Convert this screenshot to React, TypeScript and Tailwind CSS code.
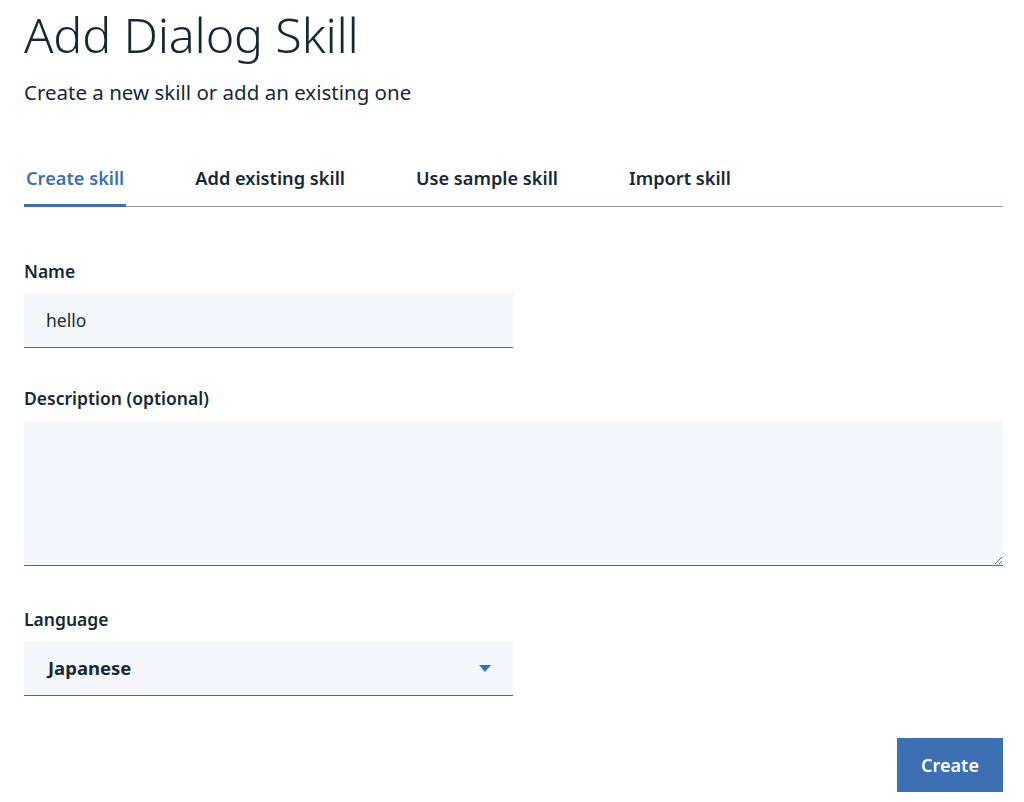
import React, { useState } from 'react';

const tabs = ['Create skill', 'Add existing skill', 'Use sample skill', 'Import skill'];

export default function App() {
  const [active, setActive] = useState(0);
  const [name, setName] = useState('hello');
  const [desc, setDesc] = useState('');

  return (
    <div
      className="min-h-screen bg-white pl-6 pr-[21px] text-[#152935]"
      style={{ fontFamily: '"Noto Sans", "Liberation Sans", sans-serif' }}
    >
      <h1 className="pt-[5px] text-[48.5px] font-light leading-[58px] tracking-[-0.2px]">Add Dialog Skill</h1>
      <p className="mt-[16px] text-[20.5px] leading-[26px]">Create a new skill or add an existing one</p>

      <div className="mt-[60px] flex border-b border-[#8c9ba5]">
        {tabs.map((t, i) => (
          <button
            key={t}
            onClick={() => setActive(i)}
            className={
              i === active
                ? 'mr-[67px] -mb-px border-b-[3px] border-[#3d70b2] px-[2px] pb-[13px] text-[18.2px] font-semibold leading-[26px] text-[#3d70b2]'
                : 'mr-[67px] -mb-px border-b-[3px] border-transparent px-[2px] pb-[13px] text-[18.2px] font-semibold leading-[26px] text-[#152935]'
            }
          >
            {t}
          </button>
        ))}
      </div>

      <div className="mt-[53px]">
        <label className="block text-[17.5px] font-semibold leading-[22px]">Name</label>
        <input
          value={name}
          onChange={(e) => setName(e.target.value)}
          className="mt-[11px] h-[55px] w-[489px] border-b border-[#5a6872] bg-[#f4f7fb] px-[22px] text-[17.5px] outline-none"
        />
      </div>

      <div className="mt-[39px]">
        <label className="block text-[17.5px] font-semibold leading-[22px]">Description (optional)</label>
        <textarea
          value={desc}
          onChange={(e) => setDesc(e.target.value)}
          className="mt-[12px] block h-[145px] w-full border-b border-[#5a6872] bg-[#f4f7fb] px-[22px] py-[14px] text-[17.5px] outline-none"
        />
      </div>

      <div className="mt-[42px]">
        <label className="block text-[17.5px] font-semibold leading-[22px]">Language</label>
        <div className="mt-[11px] flex h-[55px] w-[489px] items-center border-b border-[#5a6872] bg-[#f4f7fb] pl-[24px] pr-[22px]">
          <span className="flex-1 text-[18.5px] font-bold">Japanese</span>
          <svg width="12" height="7" viewBox="0 0 12 7" className="mt-[1px]">
            <path d="M0 0h12L6 7z" fill="#3d70b2" />
          </svg>
        </div>
      </div>

      <div className="mt-[42px] flex justify-end">
        <button className="h-[54px] w-[106px] bg-[#3d70b2] text-[18px] font-semibold text-white">Create</button>
      </div>
    </div>
  );
}
